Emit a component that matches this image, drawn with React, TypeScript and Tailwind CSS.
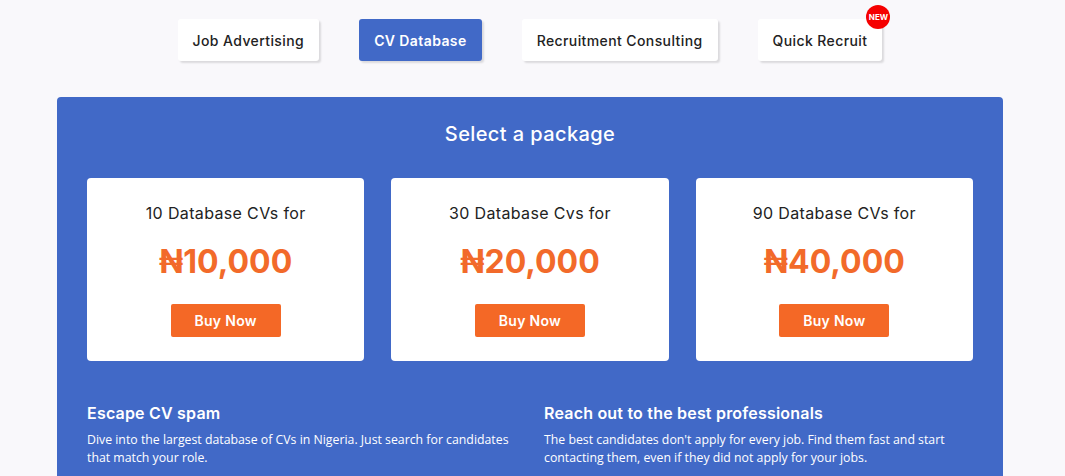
import React from "react";

const tabs = [
  { label: "Job Advertising", active: false, isNew: false },
  { label: "CV Database", active: true, isNew: false },
  { label: "Recruitment Consulting", active: false, isNew: false },
  { label: "Quick Recruit", active: false, isNew: true },
];

const packages = [
  { title: "10 Database CVs for", price: "₦10,000" },
  { title: "30 Database Cvs for", price: "₦20,000" },
  { title: "90 Database CVs for", price: "₦40,000" },
];

const features = [
  {
    title: "Escape CV spam",
    text: "Dive into the largest database of CVs in Nigeria. Just search for candidates that match your role.",
  },
  {
    title: "Reach out to the best professionals",
    text: "The best candidates don't apply for every job. Find them fast and start contacting them, even if they did not apply for your jobs.",
  },
];

function Tab({ label, active, isNew }: { label: string; active: boolean; isNew: boolean }) {
  return (
    <div className="relative">
      <button
        className={
          active
            ? "h-[42px] px-[15px] rounded-[3px] bg-[#4169c7] text-white text-[14px] font-semibold tracking-[0.4px] shadow-[2px_2px_2px_rgba(0,0,0,0.12)]"
            : "h-[42px] px-[15px] rounded-[3px] bg-white text-[#222] text-[14px] font-medium tracking-[0.4px] shadow-[2px_2px_2px_rgba(0,0,0,0.12)]"
        }
      >
        {label}
      </button>
      {isNew && (
        <span className="absolute -top-[14px] -right-[8px] w-[24px] h-[24px] rounded-full bg-[#f50000] text-white text-[8px] font-bold flex items-center justify-center">
          NEW
        </span>
      )}
    </div>
  );
}

export default function App() {
  return (
    <div className="min-h-[476px] bg-[#f9f8fb] font-['Inter',sans-serif]">
      <div className="w-[1060px] pt-[19px]">
        <div className="flex justify-center gap-[40px]">
          {tabs.map((t) => (
            <Tab key={t.label} {...t} />
          ))}
        </div>

        <div className="mx-auto mt-[36px] w-[946px] rounded-[4px] bg-[#4169c7] px-[30px] pt-[22px] pb-[40px]">
          <h2 className="text-center text-white text-[20px] font-medium tracking-[0.4px]">Select a package</h2>

          <div className="mt-[29px] grid grid-cols-3 gap-[27px]">
            {packages.map((p) => (
              <div key={p.title} className="h-[183px] rounded-[4px] bg-white flex flex-col items-center pt-[23px]">
                <p className="text-[16px] text-[#222] tracking-[0.35px]">{p.title}</p>
                <p className="mt-[21px] text-[32px] font-bold text-[#f26a2a] leading-none">{p.price}</p>
                <button className="mt-[26px] w-[110px] h-[33px] rounded-[2px] bg-[#f46826] text-white text-[14px] font-semibold tracking-[0.3px]">
                  Buy Now
                </button>
              </div>
            ))}
          </div>

          <div className="mt-[40px] grid grid-cols-2 gap-[28px]">
            {features.map((f) => (
              <div key={f.title}>
                <h3 className="text-white text-[16px] font-semibold tracking-[0.2px]">{f.title}</h3>
                <p className="mt-[6px] text-white text-[12.3px] leading-[18px] font-['Open_Sans',sans-serif]">{f.text}</p>
              </div>
            ))}
          </div>
        </div>
      </div>
    </div>
  );
}
